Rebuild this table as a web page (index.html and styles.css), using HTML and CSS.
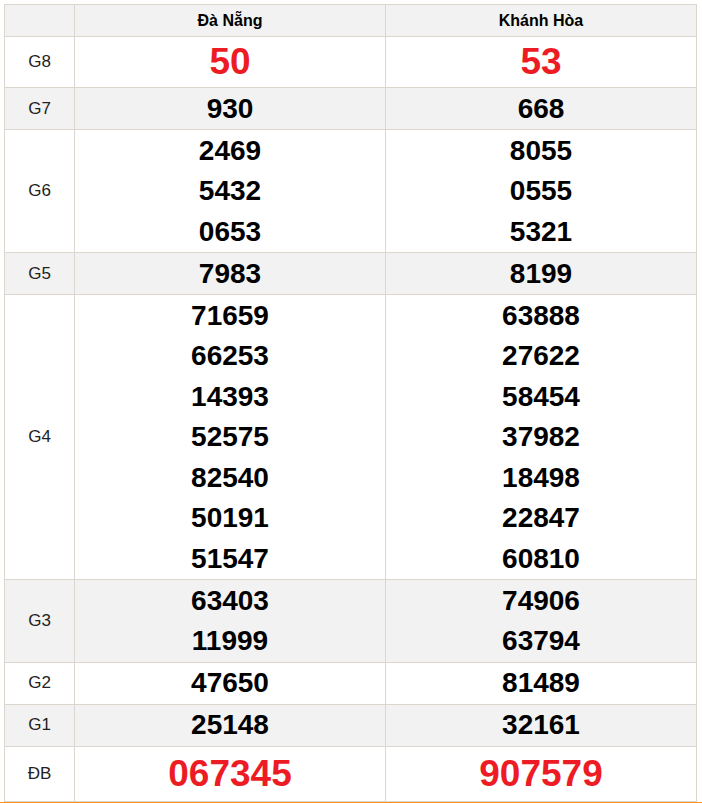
FILE: index.html
```html
<!DOCTYPE html>
<html lang="vi">
<head>
<meta charset="utf-8">
<link rel="stylesheet" href="styles.css">
</head>
<body>
<div class="wrap">
<table class="kq">
  <thead>
    <tr><th class="lbl"></th><th>Đà Nẵng</th><th>Khánh Hòa</th></tr>
  </thead>
  <tbody>
    <tr class="g8"><td class="lbl">G8</td><td class="red">50</td><td class="red">53</td></tr>
    <tr class="alt"><td class="lbl">G7</td><td>930</td><td>668</td></tr>
    <tr><td class="lbl">G6</td><td><div>2469</div><div>5432</div><div>0653</div></td><td><div>8055</div><div>0555</div><div>5321</div></td></tr>
    <tr class="alt"><td class="lbl">G5</td><td>7983</td><td>8199</td></tr>
    <tr><td class="lbl">G4</td>
      <td><div>71659</div><div>66253</div><div>14393</div><div>52575</div><div>82540</div><div>50191</div><div>51547</div></td>
      <td><div>63888</div><div>27622</div><div>58454</div><div>37982</div><div>18498</div><div>22847</div><div>60810</div></td></tr>
    <tr class="alt"><td class="lbl">G3</td><td><div>63403</div><div>11999</div></td><td><div>74906</div><div>63794</div></td></tr>
    <tr><td class="lbl">G2</td><td>47650</td><td>81489</td></tr>
    <tr class="alt"><td class="lbl">G1</td><td>25148</td><td>32161</td></tr>
    <tr class="db"><td class="lbl">ĐB</td><td class="red">067345</td><td class="red">907579</td></tr>
  </tbody>
</table>
</div>
</body>
</html>
```
FILE: styles.css
```css
html, body {
  margin: 0;
  padding: 0;
  background: #fff;
}
body {
  font-family: "Liberation Sans", Arial, sans-serif;
  color: #000;
}
.wrap {
  padding: 4px 0 0 4px;
  border-bottom: 2px solid #f7941d;
}
.kq {
  border-collapse: collapse;
  width: 693px;
  table-layout: fixed;
}
.kq th, .kq td {
  border: 1px solid #dcd6cf;
  text-align: center;
  padding: 0.5px 0 0 0;
  vertical-align: middle;
}
.kq th {
  background: #f2f2f2;
  font-size: 16px;
  font-weight: bold;
  height: 31px;
  padding: 0;
  line-height: 18px;
}
.kq th.lbl, .kq td.lbl {
  width: 69px;
}
.kq td {
  font-size: 28px;
  font-weight: bold;
  line-height: 40.5px;
}
.kq td.lbl {
  font-size: 17px;
  font-weight: normal;
  color: #222;
  line-height: 20px;
}
.kq th:nth-child(2), .kq td:nth-child(2) {
  width: 310px;
}
.kq tr.alt td {
  background: #f2f2f2;
}
.kq td.red {
  color: #ed1c24;
  font-size: 37px;
}
.kq tr.g8 td {
  height: 50px;
  padding: 0;
  line-height: 50px;
}
.kq tr.db td {
  height: 54px;
  padding: 0;
  line-height: 54px;
}
.kq tr.g8 td.lbl, .kq tr.db td.lbl {
  line-height: 20px;
}
```
